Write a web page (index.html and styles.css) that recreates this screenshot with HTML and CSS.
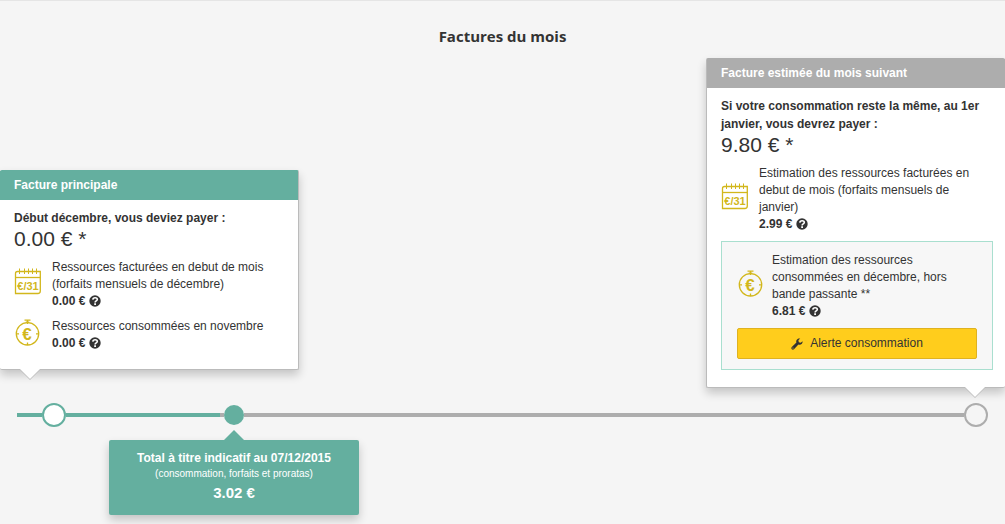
FILE: index.html
```html
<!DOCTYPE html>
<html lang="fr">
<head>
<meta charset="utf-8">
<meta name="viewport" content="width=device-width, initial-scale=1">
<title>Factures du mois</title>
<link rel="stylesheet" href="styles.css">
</head>
<body>
<svg class="sprite" aria-hidden="true">
  <symbol id="calendar" viewBox="0 0 27 27">
    <g fill="none" stroke="#d2b71c" stroke-width="1.3">
      <path d="M1.5 25.5V5.5Q1.5 3.5 3.5 3.5H26.3V23Q26.3 25.5 23.8 25.5Z"/>
      <path d="M1.5 9.5H26.3"/>
      <path stroke-width="1" d="M5.5 0.5V6M10.5 0.5V6M14.5 0.5V6M18.5 0.5V6M22.5 0.5V6"/>
    </g>
  </symbol>
  <symbol id="stopwatch" viewBox="0 0 27 27">
    <g fill="none" stroke="#d2b71c" stroke-width="1.3">
      <circle cx="13.5" cy="14.8" r="11.2"/>
      <path d="M10.5 1.2H16.5M11.8 3.2H15.2M13.5 1.2V5M2.3 14.8H5M22 14.8H24.7M13.5 23.5V26"/>
    </g>
  </symbol>
  <symbol id="help" viewBox="0 0 12 12">
    <circle cx="6" cy="6" r="5.7" fill="#333"/>
    <path d="M3.8 4.6C4 2.2 8.3 2.2 8.3 4.5C8.3 6 6.1 5.9 6.1 7.5" fill="none" stroke="#fff" stroke-width="1.6"/>
    <path d="M5.2 8.3H7V10H5.2Z" fill="#fff"/>
  </symbol>
</svg>
<main class="bills">
  <h1 class="bills-title">Factures du mois</h1>
  <div class="cards">
    <section class="card card-main">
      <h2 class="card-header">Facture principale</h2>
      <div class="card-body">
        <p class="lead">Début décembre, vous deviez payer :</p>
        <p class="amount">0.00 € *</p>
        <div class="resource">
          <svg class="resource-icon" viewBox="0 0 27 27" aria-hidden="true"><use href="#calendar"/><text class="calendar-text" x="14" y="22" text-anchor="middle">€/31</text></svg>
          <div>
            <p>Ressources facturées en debut de mois (forfaits mensuels de décembre)</p>
            <p class="price">0.00 € <button class="help" type="button" aria-label="Aide"><svg class="help-icon"><use href="#help"/></svg></button></p>
          </div>
        </div>
        <div class="resource">
          <svg class="resource-icon" viewBox="0 0 27 27" aria-hidden="true"><use href="#stopwatch"/><text class="stopwatch-text" x="13" y="21" text-anchor="middle">€</text></svg>
          <div>
            <p>Ressources consommées en novembre</p>
            <p class="price">0.00 € <button class="help" type="button" aria-label="Aide"><svg class="help-icon"><use href="#help"/></svg></button></p>
          </div>
        </div>
      </div>
    </section>
    <section class="card card-next">
      <h2 class="card-header">Facture estimée du mois suivant</h2>
      <div class="card-body">
        <p class="lead">Si votre consommation reste la même, au 1er janvier, vous devrez payer :</p>
        <p class="amount">9.80 € *</p>
        <div class="resource">
          <svg class="resource-icon" viewBox="0 0 27 27" aria-hidden="true"><use href="#calendar"/><text class="calendar-text" x="14" y="22" text-anchor="middle">€/31</text></svg>
          <div>
            <p>Estimation des ressources facturées en debut de mois (forfaits mensuels de janvier)</p>
            <p class="price">2.99 € <button class="help" type="button" aria-label="Aide"><svg class="help-icon"><use href="#help"/></svg></button></p>
          </div>
        </div>
        <div class="estimate">
          <div class="resource">
            <svg class="resource-icon" viewBox="0 0 27 27" aria-hidden="true"><use href="#stopwatch"/><text class="stopwatch-text" x="13" y="21" text-anchor="middle">€</text></svg>
            <div>
              <p>Estimation des ressources consommées en décembre, hors bande passante **</p>
              <p class="price">6.81 € <button class="help" type="button" aria-label="Aide"><svg class="help-icon"><use href="#help"/></svg></button></p>
            </div>
          </div>
          <button class="alert-button" type="button">
            <svg class="wrench" viewBox="0 0 12 12" aria-hidden="true"><path fill="#333" fill-rule="evenodd" d="M11.6 3.2C12 5.4 9.8 7.4 7.4 6.6L3 11.2C2.3 11.9 1.4 11.8.8 11.2C.2 10.6.2 9.7.8 9L5.4 4.6C4.7 2.2 6.5.1 9.2.5L7.4 2.3L7.8 4.2L9.7 4.7ZM2 9.4A.6.6 0 1 0 2 10.6A.6.6 0 1 0 2 9.4Z"/></svg>
            <span>Alerte consommation</span>
          </button>
        </div>
      </div>
    </section>
  </div>
  <div class="timeline">
    <span class="line line-start"></span>
    <span class="ring ring-main"></span>
    <span class="line line-past"></span>
    <span class="line line-gap"></span>
    <span class="dot"></span>
    <span class="line line-future"></span>
    <span class="ring ring-next"></span>
  </div>
  <section class="total">
    <h2 class="total-title">Total à titre indicatif au 07/12/2015</h2>
    <p class="total-note">(consommation, forfaits et proratas)</p>
    <p class="total-amount">3.02 €</p>
  </section>
</main>
</body>
</html>
```
FILE: styles.css
```css
* {
  box-sizing: border-box;
}

body {
  margin: 0;
  background: #f5f5f5;
  color: #333;
  font: 12px/17px "Liberation Sans", Arial, sans-serif;
}

h1, h2, p {
  margin: 0;
}

.sprite {
  position: absolute;
  width: 0;
  height: 0;
}

.calendar-text {
  fill: #d2b71c;
  font: bold 11px "Liberation Sans", sans-serif;
}

.stopwatch-text {
  fill: #d2b71c;
  font: bold 17px "Liberation Sans", sans-serif;
}

.bills {
  border-top: 1px solid #e5e5e5;
  padding-bottom: 9px;
}

.bills-title {
  padding: 25px 0 12px;
  font: bold 15px/20px "Open Sans", sans-serif;
  text-align: center;
}

.cards {
  display: flex;
  justify-content: space-between;
  align-items: flex-end;
}

.card {
  position: relative;
  width: 299px;
  background: #fff;
  border: 1px solid #bbb;
  border-radius: 2px;
  box-shadow: 0 5px 10px rgba(0, 0, 0, 0.2);
}

.card-main {
  margin-bottom: 18px;
  border-left: 0;
  border-top-color: #64af9f;
}

.card-next {
  border-right: 0;
  border-top-color: #adadad;
}

.card::after {
  content: "";
  position: absolute;
  top: 100%;
  width: 20px;
  height: 10px;
  background: #fff;
  clip-path: polygon(0 0, 100% 0, 50% 100%);
}

.card::before {
  content: "";
  position: absolute;
  top: 100%;
  width: 22px;
  height: 11px;
  background: #bbb;
  clip-path: polygon(0 0, 100% 0, 50% 100%);
}

.card-main::after {
  left: 20px;
}

.card-main::before {
  left: 19px;
}

.card-next::after {
  right: 20px;
}

.card-next::before {
  right: 19px;
}

.card-header {
  padding: 6px 14px;
  color: #fff;
  font-size: 12px;
  line-height: 17px;
}

.card-main .card-header {
  background: #64af9f;
}

.card-next .card-header {
  background: #adadad;
}

.card-body {
  padding: 9px 12px 17px 14px;
}

.lead {
  font-weight: bold;
  line-height: 18px;
}

.amount {
  font-size: 21px;
  line-height: 24px;
}

.resource {
  display: flex;
  align-items: center;
  gap: 11px;
  margin-top: 8px;
  padding-right: 16px;
}

.resource-icon {
  flex: none;
  width: 27px;
  height: 27px;
  margin-bottom: 6px;
}

.price {
  display: flex;
  align-items: center;
  gap: 4px;
  font-weight: bold;
}

.help {
  margin-bottom: 2px;
  padding: 0;
  border: 0;
  background: none;
}

.help-icon {
  display: block;
  width: 12px;
  height: 12px;
}

.estimate {
  margin-top: 8px;
  padding: 2px 15px 10px;
  background: #f7f7f7;
  border: 1px solid #a9dfcf;
}

.estimate .resource {
  gap: 8px;
}

.alert-button {
  display: flex;
  align-items: center;
  justify-content: center;
  gap: 7px;
  width: 100%;
  margin-top: 8px;
  padding: 6px;
  background: #ffcd1c;
  border: 1px solid #dfb220;
  border-radius: 2px;
  color: #333;
  font: inherit;
}

.wrench {
  width: 12px;
  height: 12px;
}

.timeline {
  display: flex;
  align-items: center;
  margin-top: 15px;
  padding: 0 17px;
}

.line {
  height: 4px;
  background: #adadad;
}

.line-start {
  width: 25px;
  background: #64af9f;
}

.line-past {
  width: 154px;
  background: #64af9f;
}

.line-gap {
  width: 4px;
}

.line-future {
  flex: 1;
}

.ring {
  width: 24px;
  height: 24px;
  border: 2px solid #adadad;
  border-radius: 50%;
}

.ring-main {
  border-color: #64af9f;
  background: #fff;
}

.dot {
  width: 20px;
  height: 20px;
  border-radius: 50%;
  background: #64af9f;
}

.total {
  position: relative;
  width: 250px;
  margin: 13px 0 0 109px;
  padding: 10px;
  background: #64af9f;
  border-radius: 2px;
  box-shadow: 0 5px 10px rgba(0, 0, 0, 0.2);
  color: #fff;
  text-align: center;
}

.total::before {
  content: "";
  position: absolute;
  bottom: 100%;
  left: 115px;
  width: 20px;
  height: 10px;
  background: #64af9f;
  clip-path: polygon(50% 0, 100% 100%, 0 100%);
}

.total-title {
  font-size: 12px;
  line-height: 17px;
}

.total-note {
  font-size: 10px;
  line-height: 14px;
}

.total-amount {
  font-size: 15px;
  font-weight: bold;
  line-height: 24px;
}
```
